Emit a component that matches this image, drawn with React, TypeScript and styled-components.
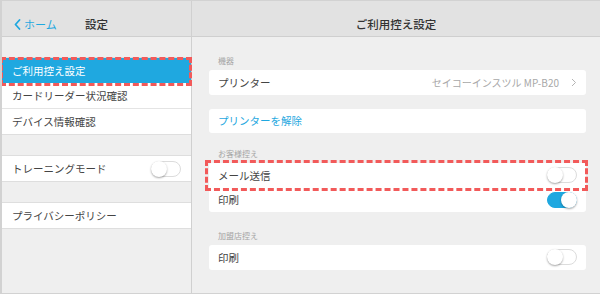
import React from "react";
import styled, { createGlobalStyle, css } from "styled-components";

const GlobalStyle = createGlobalStyle`
  html, body {
    margin: 0;
    padding: 0;
    background: #ffffff;
  }
  body {
    font-family: "Noto Sans CJK JP", "Noto Sans", "Liberation Sans", sans-serif;
    color: #333333;
  }
  * {
    box-sizing: border-box;
  }
`;

const BLUE = "#1fa8e0";

const Frame = styled.div`
  width: 600px;
  height: 294px;
  display: grid;
  grid-template-columns: 190px 1fr;
  border: 1px solid #d2d2d2;
  border-right: none;
  border-left-width: 2px;
  background: #efefef;
  overflow: hidden;
`;

const Pane = styled.div<{ side?: "left" | "right" }>`
  display: flex;
  flex-direction: column;
  min-height: 0;
  ${(p) =>
    p.side === "left" &&
    css`
      border-right: 1px solid #d0d0d0;
    `}
`;

const Header = styled.div`
  height: 36px;
  flex: none;
  background: #e2e2e2;
  border-bottom: 1px solid #cfcfcf;
  display: grid;
  grid-template-columns: 1fr auto 1fr;
  align-items: end;
  padding-bottom: 4px;
`;

const Title = styled.div`
  grid-column: 2;
  font-size: 11.5px;
  line-height: 16px;
  font-weight: 500;
  color: #333333;
`;

const Back = styled.div`
  grid-column: 1;
  display: flex;
  align-items: center;
  gap: 3px;
  padding-left: 12px;
  font-size: 11px;
  line-height: 16px;
  color: ${BLUE};
`;

const LeftBody = styled.div`
  padding-top: 20px;
  display: flex;
  flex-direction: column;
  gap: 20px;
`;

const Group = styled.div`
  background: #ffffff;
  border-top: 1px solid #dedede;
  border-bottom: 1px solid #dedede;
`;

const MenuRow = styled.div<{ selected?: boolean }>`
  height: 25px;
  display: flex;
  align-items: center;
  justify-content: space-between;
  padding: 0 10px;
  font-size: 10.5px;
  color: #444444;
  & + & {
    height: 26px;
    border-top: 1px solid #e4e4e4;
  }
  ${(p) =>
    p.selected &&
    css`
      background: ${BLUE};
      color: #ffffff;
    `}
`;

const Highlight = styled.div<{ inset: string }>`
  position: relative;
  &::after {
    content: "";
    position: absolute;
    inset: ${(p) => p.inset};
    border: 3px dashed #f25a5a;
    pointer-events: none;
    z-index: 2;
  }
`;

const RightBody = styled.div`
  padding: 18px 14px 0 17px;
  display: flex;
  flex-direction: column;
`;

const Section = styled.div<{ gap: number }>`
  margin-top: ${(p) => p.gap}px;
  &:first-child {
    margin-top: 0;
  }
`;

const SectionLabel = styled.div`
  font-size: 8px;
  line-height: 12px;
  color: #a4a4a4;
  padding-left: 9px;
  margin-bottom: 3px;
`;

const Card = styled.div`
  background: #ffffff;
  border-radius: 3px;
`;

const CardRow = styled.div<{ link?: boolean }>`
  height: 24.5px;
  display: flex;
  align-items: center;
  padding: 0 9px;
  font-size: 10.5px;
  color: ${(p) => (p.link ? BLUE : "#444444")};
  & + & {
    border-top: 1px solid #e8e8e8;
  }
`;

const Label = styled.span`
  flex: 1;
`;

const Value = styled.span`
  font-size: 10px;
  color: #a8a8a8;
  margin-right: 12px;
`;

const ToggleTrack = styled.div<{ on?: boolean }>`
  width: 30px;
  height: 16px;
  border-radius: 8px;
  position: relative;
  flex: none;
  background: ${(p) => (p.on ? BLUE : "#ffffff")};
  border: 1px solid ${(p) => (p.on ? BLUE : "#dcdcdc")};
`;

const Knob = styled.div<{ on?: boolean }>`
  position: absolute;
  top: -1px;
  left: ${(p) => (p.on ? "13px" : "-1px")};
  width: 16px;
  height: 16px;
  border-radius: 50%;
  background: #ffffff;
  box-shadow: 0 1px 2px rgba(0, 0, 0, 0.35);
`;

const Toggle = ({ on }: { on?: boolean }) => (
  <ToggleTrack on={on}>
    <Knob on={on} />
  </ToggleTrack>
);

const BackChevron = () => (
  <svg width="7" height="11" viewBox="0 0 7 11">
    <polyline
      points="5.5,1 1.5,5.5 5.5,10"
      fill="none"
      stroke={BLUE}
      strokeWidth="1.8"
      strokeLinecap="round"
      strokeLinejoin="round"
    />
  </svg>
);

const Chevron = () => (
  <svg width="6" height="9" viewBox="0 0 6 9">
    <polyline
      points="1,1 4.5,4.5 1,8"
      fill="none"
      stroke="#b4b4b4"
      strokeWidth="1"
    />
  </svg>
);

const App = () => {
  return (
    <>
      <GlobalStyle />
      <Frame>
        <Pane side="left">
          <Header>
            <Back>
              <BackChevron />
              ホーム
            </Back>
            <Title>設定</Title>
          </Header>
          <LeftBody>
            <Group>
              <Highlight inset="-1px -1px -3px -2px">
                <MenuRow selected>ご利用控え設定</MenuRow>
              </Highlight>
              <MenuRow>カードリーダー状況確認</MenuRow>
              <MenuRow>デバイス情報確認</MenuRow>
            </Group>
            <Group>
              <MenuRow>
                トレーニングモード
                <Toggle />
              </MenuRow>
            </Group>
            <Group>
              <MenuRow>プライバシーポリシー</MenuRow>
            </Group>
          </LeftBody>
        </Pane>
        <Pane side="right">
          <Header>
            <Title>ご利用控え設定</Title>
          </Header>
          <RightBody>
            <Section gap={0}>
              <SectionLabel>機器</SectionLabel>
              <Card>
                <CardRow>
                  <Label>プリンター</Label>
                  <Value>セイコーインスツル MP-B20</Value>
                  <Chevron />
                </CardRow>
              </Card>
            </Section>
            <Section gap={14}>
              <Card>
                <CardRow link>プリンターを解除</CardRow>
              </Card>
            </Section>
            <Section gap={15}>
              <SectionLabel>お客様控え</SectionLabel>
              <Card>
                <Highlight inset="-3px -2px -3px -4px">
                  <CardRow>
                    <Label>メール送信</Label>
                    <Toggle />
                  </CardRow>
                </Highlight>
                <CardRow>
                  <Label>印刷</Label>
                  <Toggle on />
                </CardRow>
              </Card>
            </Section>
            <Section gap={18}>
              <SectionLabel>加盟店控え</SectionLabel>
              <Card>
                <CardRow>
                  <Label>印刷</Label>
                  <Toggle />
                </CardRow>
              </Card>
            </Section>
          </RightBody>
        </Pane>
      </Frame>
    </>
  );
};

export default App;
